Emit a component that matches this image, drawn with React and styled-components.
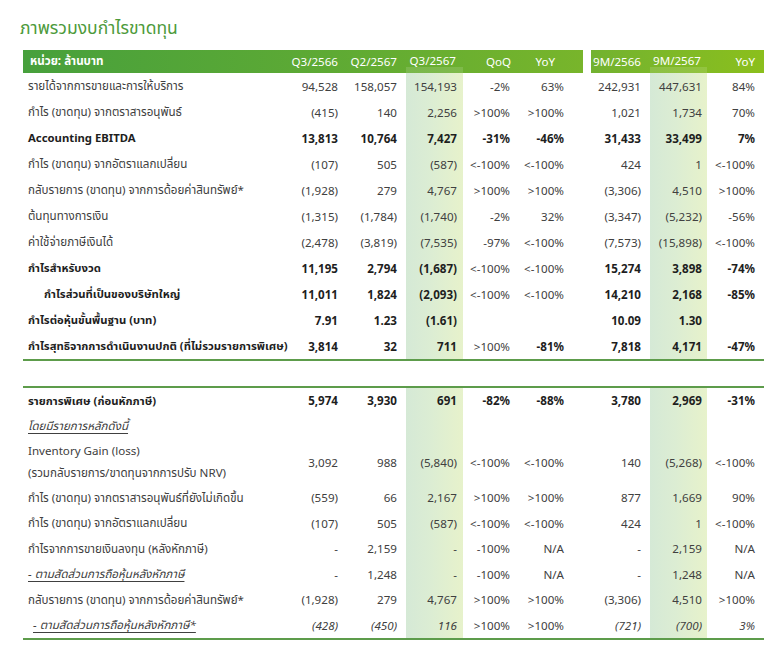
import React from "react";
import styled, { createGlobalStyle, css } from "styled-components";

const GlobalStyle = createGlobalStyle`
  html, body { margin: 0; padding: 0; background: #ffffff; }
  body {
    font-family: "Noto Sans", "Noto Sans Thai", "Loma", "Garuda", sans-serif;
    color: #3a3a3a;
  }
`;

/* column geometry: width, padding-right for values, padding-right for header labels */
const COLS = [
  { w: 54, pr: 6, hpr: 6 },
  { w: 62, pr: 9, hpr: 9 },
  { w: 57, pr: 6, hpr: 7, hl: true },
  { w: 53, pr: 6, hpr: 5 },
  { w: 67, pr: 19, hpr: 28 },
  { gap: true, w: 8 },
  { w: 59, pr: 9, hpr: 9 },
  { w: 57, pr: 5, hpr: 6, hl: true },
  { w: 57, pr: 9, hpr: 9 },
];
const LABEL_W = 267;
const TEMPLATE = `${LABEL_W}px ${COLS.map((c) => c.w + "px").join(" ")}`;

const HL_BG = "linear-gradient(90deg, #d5e9d6 0%, #dcedd3 45%, #e7f2cb 100%)";

const Page = styled.div`
  padding: 14px 0 20px 0;
  width: 784px;
`;

const Title = styled.h1`
  margin: 0 0 9px 20px;
  font-size: 17.5px;
  line-height: 27px;
  font-weight: 400;
  color: #4d9a3b;
`;

const Table = styled.div`
  margin-left: 23px;
  width: 741px;
  display: flex;
  flex-direction: column;
`;

const HeadRow = styled.div`
  display: flex;
  gap: 8px;
  height: 23px;
`;

const HeadSegment = styled.div`
  display: grid;
  grid-template-columns: ${(p) => p.$template};
  background: ${(p) => p.$bg};
  color: #ffffff;
  font-size: 11.6px;
`;

const HeadCell = styled.div`
  display: flex;
  align-items: center;
  justify-content: ${(p) => (p.$left ? "flex-start" : "flex-end")};
  padding: ${(p) => (p.$left ? "0 0 0 7px" : `0 ${p.$pr}px 1px 0`)};
  font-weight: ${(p) => (p.$left ? 700 : 400)};
  white-space: nowrap;
  ${(p) =>
    p.$hl &&
    css`
      align-items: flex-start;
      padding-top: 3px;
      background: linear-gradient(
        180deg,
        transparent 0,
        transparent 17px,
        rgba(255, 255, 255, 0.13) 17px
      );
    `}
`;

const Section = styled.div`
  display: flex;
  flex-direction: column;
  border-top: ${(p) => (p.$topLine ? "2px solid #5d9c4b" : "none")};
  border-bottom: 2px solid #5d9c4b;
  margin-top: ${(p) => (p.$gapAbove ? "25px" : "0")};
`;

const Row = styled.div`
  display: grid;
  grid-template-columns: ${TEMPLATE};
  height: ${(p) => p.$h}px;
  font-size: 11.6px;
`;

const LabelCell = styled.div`
  display: flex;
  flex-direction: column;
  justify-content: center;
  padding-left: ${(p) => 5 + (p.$indent || 0)}px;
  font-weight: ${(p) => (p.$bold ? 700 : 400)};
  font-size: ${(p) => (p.$bold ? "11.3px" : "11.6px")};
  font-style: ${(p) => (p.$italic ? "italic" : "normal")};
  text-decoration: ${(p) => (p.$underline ? "underline" : "none")};
  text-underline-offset: 3px;
  color: ${(p) => (p.$bold ? "#1e1e1e" : "#404040")};
  white-space: nowrap;
  line-height: 22px;
`;

const ValueCell = styled.div`
  display: flex;
  align-items: center;
  justify-content: flex-end;
  padding-right: ${(p) => p.$pr}px;
  background: ${(p) => (p.$hl ? HL_BG : "transparent")};
  font-weight: ${(p) => (p.$bold ? 700 : 400)};
  font-style: ${(p) => (p.$italic ? "italic" : "normal")};
  color: ${(p) => (p.$bold ? "#1e1e1e" : "#404040")};
  white-space: nowrap;
`;

const Spacer = styled.div``;

const HEAD_LEFT = ["Q3/2566", "Q2/2567", "Q3/2567", "QoQ", "YoY"];
const HEAD_RIGHT = ["9M/2566", "9M/2567", "YoY"];

const section1 = [
  { label: "รายได้จากการขายและการให้บริการ", v: ["94,528", "158,057", "154,193", "-2%", "63%", "242,931", "447,631", "84%"] },
  { label: "กำไร (ขาดทุน) จากตราสารอนุพันธ์", v: ["(415)", "140", "2,256", ">100%", ">100%", "1,021", "1,734", "70%"] },
  { label: "Accounting EBITDA", bold: true, v: ["13,813", "10,764", "7,427", "-31%", "-46%", "31,433", "33,499", "7%"] },
  { label: "กำไร (ขาดทุน) จากอัตราแลกเปลี่ยน", v: ["(107)", "505", "(587)", "<-100%", "<-100%", "424", "1", "<-100%"] },
  { label: "กลับรายการ (ขาดทุน) จากการด้อยค่าสินทรัพย์*", v: ["(1,928)", "279", "4,767", ">100%", ">100%", "(3,306)", "4,510", ">100%"] },
  { label: "ต้นทุนทางการเงิน", v: ["(1,315)", "(1,784)", "(1,740)", "-2%", "32%", "(3,347)", "(5,232)", "-56%"] },
  { label: "ค่าใช้จ่ายภาษีเงินได้", v: ["(2,478)", "(3,819)", "(7,535)", "-97%", "<-100%", "(7,573)", "(15,898)", "<-100%"] },
  { label: "กำไรสำหรับงวด", bold: true, v: ["11,195", "2,794", "(1,687)", "<-100%", "<-100%", "15,274", "3,898", "-74%"] },
  { label: "กำไรส่วนที่เป็นของบริษัทใหญ่", bold: true, indent: 16, v: ["11,011", "1,824", "(2,093)", "<-100%", "<-100%", "14,210", "2,168", "-85%"] },
  { label: "กำไรต่อหุ้นขั้นพื้นฐาน (บาท)", bold: true, v: ["7.91", "1.23", "(1.61)", "", "", "10.09", "1.30", ""] },
  { label: "กำไรสุทธิจากการดำเนินงานปกติ (ที่ไม่รวมรายการพิเศษ)", bold: true, v: ["3,814", "32", "711", ">100%", "-81%", "7,818", "4,171", "-47%"] },
];

const section2 = [
  { label: "รายการพิเศษ (ก่อนหักภาษี)", bold: true, v: ["5,974", "3,930", "691", "-82%", "-88%", "3,780", "2,969", "-31%"] },
  { label: "โดยมีรายการหลักดังนี้", italic: true, underline: true, v: ["", "", "", "", "", "", "", ""] },
  { label: ["Inventory Gain (loss)", "(รวมกลับรายการ/ขาดทุนจากการปรับ NRV)"], h: 46, v: ["3,092", "988", "(5,840)", "<-100%", "<-100%", "140", "(5,268)", "<-100%"] },
  { label: "กำไร (ขาดทุน) จากตราสารอนุพันธ์ที่ยังไม่เกิดขึ้น", v: ["(559)", "66", "2,167", ">100%", ">100%", "877", "1,669", "90%"] },
  { label: "กำไร (ขาดทุน) จากอัตราแลกเปลี่ยน", v: ["(107)", "505", "(587)", "<-100%", "<-100%", "424", "1", "<-100%"] },
  { label: "กำไรจากการขายเงินลงทุน (หลังหักภาษี)", v: ["-", "2,159", "-", "-100%", "N/A", "-", "2,159", "N/A"] },
  { label: "- ตามสัดส่วนการถือหุ้นหลังหักภาษี", italic: true, underline: true, v: ["-", "1,248", "-", "-100%", "N/A", "-", "1,248", "N/A"] },
  { label: "กลับรายการ (ขาดทุน) จากการด้อยค่าสินทรัพย์*", v: ["(1,928)", "279", "4,767", ">100%", ">100%", "(3,306)", "4,510", ">100%"] },
  { label: "- ตามสัดส่วนการถือหุ้นหลังหักภาษี*", italic: true, underline: true, indent: 5, valItalic: true, v: ["(428)", "(450)", "116", ">100%", ">100%", "(721)", "(700)", "3%"] },
];

const isThreshold = (s) => s.startsWith(">") || s.startsWith("<");

function DataRow({ row, height }) {
  let vi = 0;
  const labels = Array.isArray(row.label) ? row.label : [row.label];
  return (
    <Row $h={row.h || height}>
      <LabelCell
        $bold={row.bold}
        $italic={row.italic}
        $underline={row.underline}
        $indent={row.indent}
      >
        {labels.map((l) => (
          <span key={l}>{l}</span>
        ))}
      </LabelCell>
      {COLS.map((c, i) => {
        if (c.gap) return <Spacer key={i} />;
        const val = row.v[vi++];
        const thr = isThreshold(val);
        return (
          <ValueCell
            key={i}
            $pr={c.pr}
            $hl={c.hl}
            $bold={row.bold && !thr}
            $italic={row.valItalic && !thr}
          >
            {val}
          </ValueCell>
        );
      })}
    </Row>
  );
}

export default function App() {
  const leftCols = COLS.slice(0, 5);
  const rightCols = COLS.slice(6);
  return (
    <>
      <GlobalStyle />
      <Page>
        <Title>ภาพรวมงบกำไรขาดทุน</Title>
        <Table>
          <HeadRow>
            <HeadSegment
              $template={`${LABEL_W}px ${leftCols.map((c) => c.w + "px").join(" ")}`}
              $bg="linear-gradient(90deg, #47a03c 0%, #5eaa34 55%, #78b52b 100%)"
            >
              <HeadCell $left>หน่วย: ล้านบาท</HeadCell>
              {leftCols.map((c, i) => (
                <HeadCell key={i} $pr={c.hpr} $hl={c.hl}>
                  {HEAD_LEFT[i]}
                </HeadCell>
              ))}
            </HeadSegment>
            <HeadSegment
              $template={rightCols.map((c) => c.w + "px").join(" ")}
              $bg="linear-gradient(90deg, #72b230 0%, #7fb927 50%, #8bbf1c 100%)"
            >
              {rightCols.map((c, i) => (
                <HeadCell key={i} $pr={c.hpr} $hl={c.hl}>
                  {HEAD_RIGHT[i]}
                </HeadCell>
              ))}
            </HeadSegment>
          </HeadRow>
          <Section>
            {section1.map((r, i) => (
              <DataRow key={i} row={r} height={26} />
            ))}
          </Section>
          <Section $topLine $gapAbove>
            {section2.map((r, i) => (
              <DataRow key={i} row={r} height={25.5} />
            ))}
          </Section>
        </Table>
      </Page>
    </>
  );
}
